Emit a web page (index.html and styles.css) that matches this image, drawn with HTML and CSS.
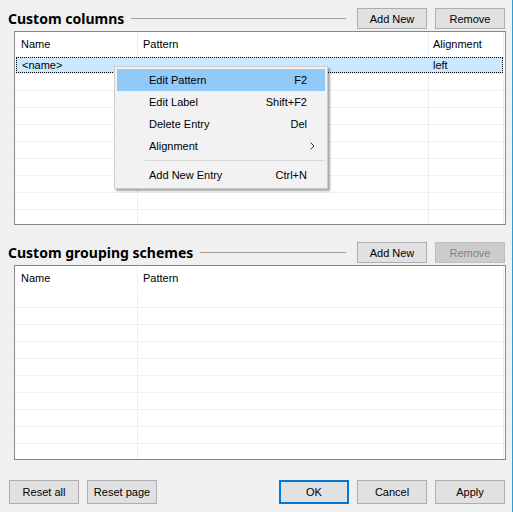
FILE: index.html
```html
<!DOCTYPE html>
<html>
<head>
<meta charset="utf-8">
<link rel="stylesheet" href="styles.css">
</head>
<body>
<div class="window">
  <section class="group">
    <div class="group-head">
      <h2 class="group-title">Custom columns</h2>
      <div class="rule"></div>
      <button class="btn">Add New</button>
      <button class="btn">Remove</button>
    </div>
    <div class="table t1">
      <div class="row head">
        <div class="cell c-name">Name</div>
        <div class="cell c-pat">Pattern</div>
        <div class="cell c-al">Alignment</div>
      </div>
      <div class="row sel">
        <div class="selbox">
          <div class="scell s-first">&lt;name&gt;</div>
          <div class="scell s-al">left</div>
        </div>
      </div>
      <div class="row"><div class="cell c-name"></div><div class="cell c-pat"></div><div class="cell c-al"></div></div>
      <div class="row"><div class="cell c-name"></div><div class="cell c-pat"></div><div class="cell c-al"></div></div>
      <div class="row"><div class="cell c-name"></div><div class="cell c-pat"></div><div class="cell c-al"></div></div>
      <div class="row"><div class="cell c-name"></div><div class="cell c-pat"></div><div class="cell c-al"></div></div>
      <div class="row"><div class="cell c-name"></div><div class="cell c-pat"></div><div class="cell c-al"></div></div>
      <div class="row"><div class="cell c-name"></div><div class="cell c-pat"></div><div class="cell c-al"></div></div>
      <div class="row"><div class="cell c-name"></div><div class="cell c-pat"></div><div class="cell c-al"></div></div>
      <div class="row"><div class="cell c-name"></div><div class="cell c-pat"></div><div class="cell c-al"></div></div>
      <div class="row"><div class="cell c-name"></div><div class="cell c-pat"></div><div class="cell c-al"></div></div>
    </div>
  </section>

  <section class="group group2">
    <div class="group-head">
      <h2 class="group-title">Custom grouping schemes</h2>
      <div class="rule"></div>
      <button class="btn">Add New</button>
      <button class="btn" disabled>Remove</button>
    </div>
    <div class="table t2">
      <div class="row head">
        <div class="cell c-name">Name</div>
        <div class="cell c-pat2">Pattern</div>
      </div>
      <div class="row"><div class="cell c-name"></div><div class="cell c-pat2"></div></div>
      <div class="row"><div class="cell c-name"></div><div class="cell c-pat2"></div></div>
      <div class="row"><div class="cell c-name"></div><div class="cell c-pat2"></div></div>
      <div class="row"><div class="cell c-name"></div><div class="cell c-pat2"></div></div>
      <div class="row"><div class="cell c-name"></div><div class="cell c-pat2"></div></div>
      <div class="row"><div class="cell c-name"></div><div class="cell c-pat2"></div></div>
      <div class="row"><div class="cell c-name"></div><div class="cell c-pat2"></div></div>
      <div class="row"><div class="cell c-name"></div><div class="cell c-pat2"></div></div>
      <div class="row"><div class="cell c-name"></div><div class="cell c-pat2"></div></div>
      <div class="row"><div class="cell c-name"></div><div class="cell c-pat2"></div></div>
    </div>
  </section>

  <div class="footer">
    <button class="btn btn-lg">Reset all</button>
    <button class="btn btn-lg">Reset page</button>
    <div class="spacer"></div>
    <button class="btn btn-lg btn-default">OK</button>
    <button class="btn btn-lg">Cancel</button>
    <button class="btn btn-lg">Apply</button>
  </div>

  <div class="menu">
    <div class="mi hl"><span class="ml">Edit Pattern</span><span class="sc">F2</span></div>
    <div class="mi"><span class="ml">Edit Label</span><span class="sc">Shift+F2</span></div>
    <div class="mi"><span class="ml">Delete Entry</span><span class="sc">Del</span></div>
    <div class="mi"><span class="ml">Alignment</span>
      <svg class="arrow" width="5" height="8" viewBox="0 0 5 8"><polyline points="0.5,0.5 4,4 0.5,7.5" fill="none" stroke="#333" stroke-width="1"/></svg>
    </div>
    <div class="sep"></div>
    <div class="mi"><span class="ml">Add New Entry</span><span class="sc">Ctrl+N</span></div>
  </div>
</div>
</body>
</html>
```

FILE: styles.css
```css
html, body {
  margin: 0;
  padding: 0;
}
body {
  background: #f0f0f0;
  font-family: "Liberation Sans", Arial, sans-serif;
  font-size: 11px;
  color: #000;
}
.window {
  position: relative;
  width: 513px;
  height: 512px;
  box-sizing: border-box;
  border-right: 1px solid #2a9fd6;
  padding: 8px 7px 0 8px;
  overflow: hidden;
}
.group-head {
  display: flex;
  align-items: center;
  height: 21px;
}
.group-title {
  margin: 0;
  font-family: "Noto Sans", sans-serif;
  font-weight: 700;
  font-size: 14px;
  line-height: 21px;
  color: #000;
  white-space: nowrap;
}
.rule {
  flex: 1;
  height: 1px;
  background: #a0a0a0;
  margin: 0 11px 0 7px;
}
.btn {
  flex: none;
  width: 70px;
  height: 21px;
  box-sizing: border-box;
  border: 1px solid #adadad;
  background: #e1e1e1;
  font: inherit;
  color: #000;
  padding: 0;
  margin: 0;
}
.btn + .btn {
  margin-left: 8px;
}
.btn:disabled {
  background: #cccccc;
  border-color: #bfbfbf;
  color: #838383;
}
.table {
  margin: 2px -1px 0 6px;
  height: 194px;
  box-sizing: border-box;
  border: 1px solid #828790;
  background: #fff;
  overflow: hidden;
}
.t2 {
  height: 195px;
}
.group2 {
  margin-top: 17px;
}
.row {
  display: flex;
  height: 17px;
  box-sizing: border-box;
  border-bottom: 1px solid #f0f0f0;
}
.row.head {
  height: 25px;
  border-bottom-color: #fff;
}
.cell {
  flex: none;
  box-sizing: border-box;
  border-right: 1px solid #e8eef5;
  line-height: 16px;
  white-space: nowrap;
  overflow: hidden;
}
.head .cell {
  line-height: 24px;
}
.c-name {
  width: 123px;
  padding-left: 6px;
}
.c-pat {
  width: 291px;
  padding-left: 5px;
}
.c-al {
  width: 75px;
  padding-left: 4px;
}
.c-pat2 {
  width: 366px;
  padding-left: 5px;
}
.row.sel {
  border-bottom-color: #f0f0f0;
}
.selbox {
  display: flex;
  flex: 1;
  margin: 0 2px 0 1px;
  height: 16px;
  box-sizing: border-box;
  border: 1px dotted #000;
  background: #cce8ff;
  line-height: 14px;
}
.scell {
  white-space: nowrap;
}
.s-first {
  width: 412px;
  padding-left: 5px;
  box-sizing: border-box;
}
.s-al {
  padding-left: 4px;
}
.footer {
  display: flex;
  margin-top: 20px;
  padding-left: 1px;
}
.spacer {
  flex: 1;
}
.btn-lg {
  height: 24px;
}
.spacer + .btn {
  margin-left: 0;
}
.btn-default {
  border: 2px solid #0078d7;
}
.menu {
  position: absolute;
  left: 114px;
  top: 66px;
  width: 214px;
  box-sizing: border-box;
  border: 1px solid #cccccc;
  background: #f2f2f2;
  padding: 2px;
  box-shadow: 2px 2px 2px rgba(0, 0, 0, 0.35);
}
.mi {
  position: relative;
  display: flex;
  align-items: center;
  height: 22px;
  padding: 0 18px 0 32px;
}
.mi.hl {
  background: #91c9f7;
}
.ml {
  flex: 1;
}
.arrow {
  position: absolute;
  right: 10px;
  top: 7px;
}
.sep {
  height: 1px;
  background: #d7d7d7;
  margin: 3px 0 3px 28px;
}
```
